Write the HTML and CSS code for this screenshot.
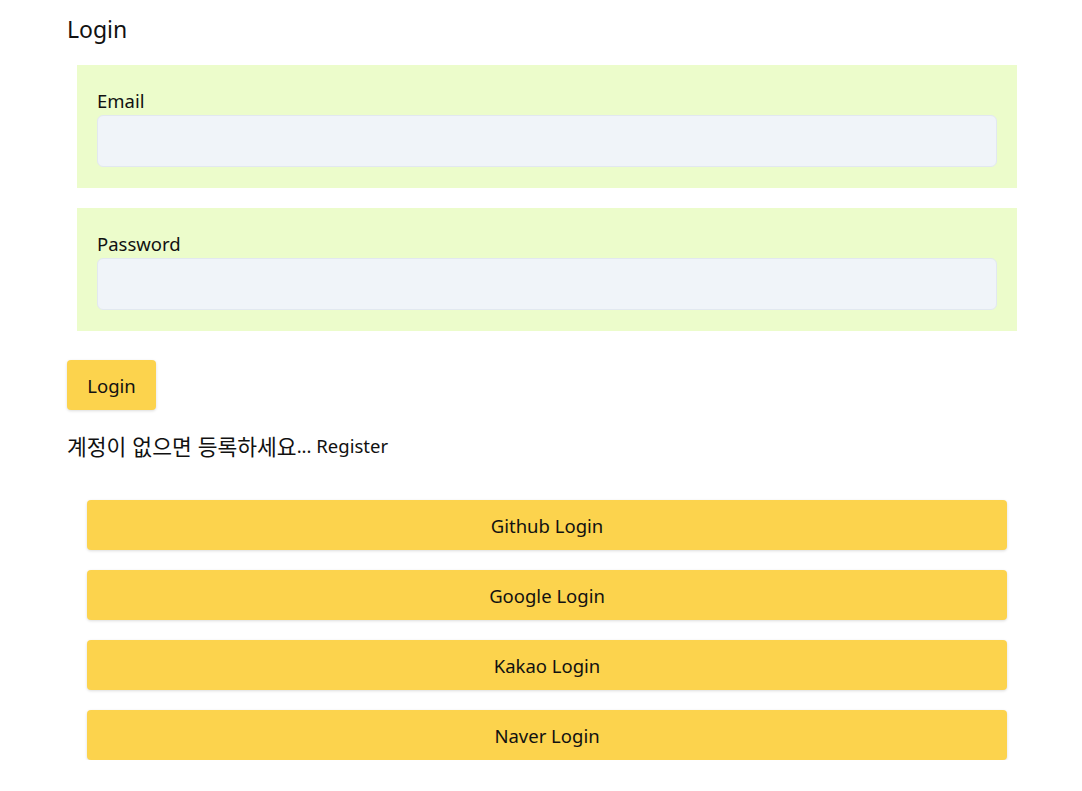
FILE: index.html
```html
<!DOCTYPE html>
<html lang="ko">
<head>
<meta charset="utf-8">
<title>Login</title>
<link rel="stylesheet" href="styles.css">
</head>
<body>
<main class="page">
  <h1 class="title">Login</h1>
  <form class="form">
    <div class="field">
      <label class="label" for="email">Email</label>
      <input class="input" id="email" type="email">
    </div>
    <div class="field">
      <label class="label" for="password">Password</label>
      <input class="input" id="password" type="password">
    </div>
    <button class="btn btn-login" type="button">Login</button>
  </form>
  <p class="register"><span class="register-ko">계정이 없으면 등록하세요</span>... <a class="register-link" href="#">Register</a></p>
  <div class="social">
    <button class="btn btn-social" type="button">Github Login</button>
    <button class="btn btn-social" type="button">Google Login</button>
    <button class="btn btn-social" type="button">Kakao Login</button>
    <button class="btn btn-social" type="button">Naver Login</button>
  </div>
</main>
</body>
</html>
```
FILE: styles.css
```css
* { box-sizing: border-box; }
body {
  margin: 0;
  background: #ffffff;
  color: #111111;
  font-family: "Noto Sans", "Noto Sans CJK KR", sans-serif;
  font-size: 18.5px;
  line-height: 27px;
}
.page {
  width: 1027px;
  padding: 11px 0 0 67px;
}
.title {
  margin: 0 0 18px;
  font-size: 23px;
  font-weight: 400;
  line-height: 36px;
}
.form {
  display: flex;
  flex-direction: column;
  align-items: flex-start;
}
.field {
  align-self: stretch;
  margin: 0 10px 20px;
  padding: 22px 20px 21px;
  background: #ecfccb;
  display: flex;
  flex-direction: column;
}
.label { display: block; }
.input {
  height: 52px;
  margin-top: 1px;
  background: #f0f4f9;
  border: 1px solid #e2e8f0;
  border-radius: 6px;
  font: inherit;
}
.btn {
  font: inherit;
  color: #111111;
  background: #fcd34d;
  border: none;
  border-radius: 4px;
  box-shadow: 0 1px 3px rgba(0,0,0,0.14);
  height: 50px;
  cursor: pointer;
}
.btn-login {
  margin-top: 9px;
  padding: 0;
  width: 89px;
}
.register {
  margin: 22px 0 0;
  height: 27px;
}
.register-ko {
  font-family: "Noto Sans CJK KR", sans-serif;
  font-size: 21.5px;
  line-height: 27px;
  vertical-align: top;
}
.register-link {
  color: inherit;
  text-decoration: none;
}
.social {
  margin: 41px 20px 0;
  display: flex;
  flex-direction: column;
  gap: 20px;
}
.btn-social { width: 100%; }
```
